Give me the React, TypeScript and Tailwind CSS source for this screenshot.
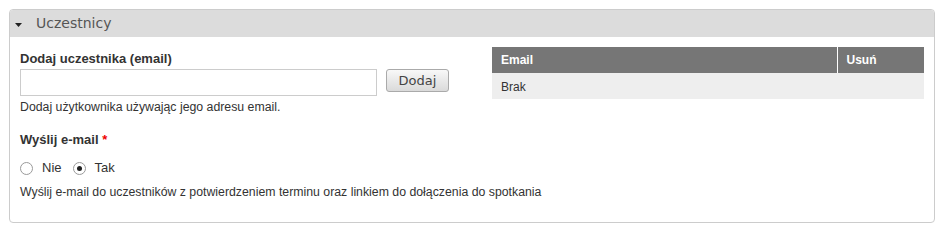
import React, { useState } from 'react';

const Radio: React.FC<{ checked: boolean; label: string; onClick: () => void }> = ({ checked, label, onClick }) => (
  <label className="flex items-center cursor-pointer" onClick={onClick}>
    <span className="w-[13px] h-[13px] rounded-full border border-[#9a9a9a] bg-white flex items-center justify-center">
      {checked && <span className="w-[5px] h-[5px] rounded-full bg-[#222]" />}
    </span>
    <span className="ml-[9px] mr-[11px] text-[13px] text-[#333]">{label}</span>
  </label>
);

export default function App() {
  const [sendMail, setSendMail] = useState(true);

  return (
    <div className="pt-[9px] pl-[9px] font-['Liberation_Sans',Arial,sans-serif] bg-white w-[944px] h-[233px]">
      <div className="w-[926px] h-[214px] border border-[#ccc] rounded-[4px] overflow-hidden">
        {/* Header */}
        <div className="h-[27px] bg-[#dcdcdc] flex items-center">
          <svg width="7" height="4" viewBox="0 0 7 4" className="ml-[5px] mt-[3px]">
            <polygon points="0,0 7,0 3.5,4" fill="#222" />
          </svg>
          <span className="ml-[14px] text-[14px] text-[#555] font-['DejaVu_Sans',sans-serif]">Uczestnicy</span>
        </div>

        {/* Body */}
        <div className="flex pl-[10px] pr-[10px]">
          <div className="flex flex-col whitespace-nowrap w-[461px] shrink-0">
            <div className="mt-[14px] text-[13px] font-bold text-[#333] leading-[16px]">Dodaj uczestnika (email)</div>
            <div className="flex items-start mt-[2px]">
              <input className="w-[357px] h-[27px] border border-[#ccc] bg-white outline-none px-1 text-[13px]" />
              <button className="ml-[9px] w-[63px] h-[23px] border border-[#aaa] rounded-[3px] bg-gradient-to-b from-[#f8f8f8] to-[#dadada] text-[13px] text-[#444] font-['DejaVu_Sans',sans-serif] leading-none">
                Dodaj
              </button>
            </div>
            <div className="mt-[3px] text-[12.3px] text-[#333] leading-[16px]">Dodaj użytkownika używając jego adresu email.</div>

            <div className="mt-[17px] text-[13px] font-bold text-[#333] leading-[16px]">
              Wyślij e-mail <span className="text-[#e00]">*</span>
            </div>
            <div className="flex items-center mt-[12px] h-[16px]">
              <Radio checked={!sendMail} label="Nie" onClick={() => setSendMail(false)} />
              <Radio checked={sendMail} label="Tak" onClick={() => setSendMail(true)} />
            </div>
            <div className="mt-[8px] text-[12.3px] text-[#333] leading-[16px]">
              Wyślij e-mail do uczestników z potwierdzeniem terminu oraz linkiem do dołączenia do spotkania
            </div>
          </div>

          <div className="mt-[10px] ml-auto shrink-0">
            <table className="w-[432px] border-collapse text-[12px]">
              <thead>
                <tr className="bg-[#767676] text-white h-[26px]">
                  <th className="text-left font-bold pl-[9px] w-[345px] border-r border-white">Email</th>
                  <th className="text-left font-bold pl-[9px]">Usuń</th>
                </tr>
              </thead>
              <tbody>
                <tr className="bg-[#eee] h-[26px]">
                  <td className="pl-[9px] text-[#333] pt-[1px]">Brak</td>
                  <td />
                </tr>
              </tbody>
            </table>
          </div>
        </div>
      </div>
    </div>
  );
}
